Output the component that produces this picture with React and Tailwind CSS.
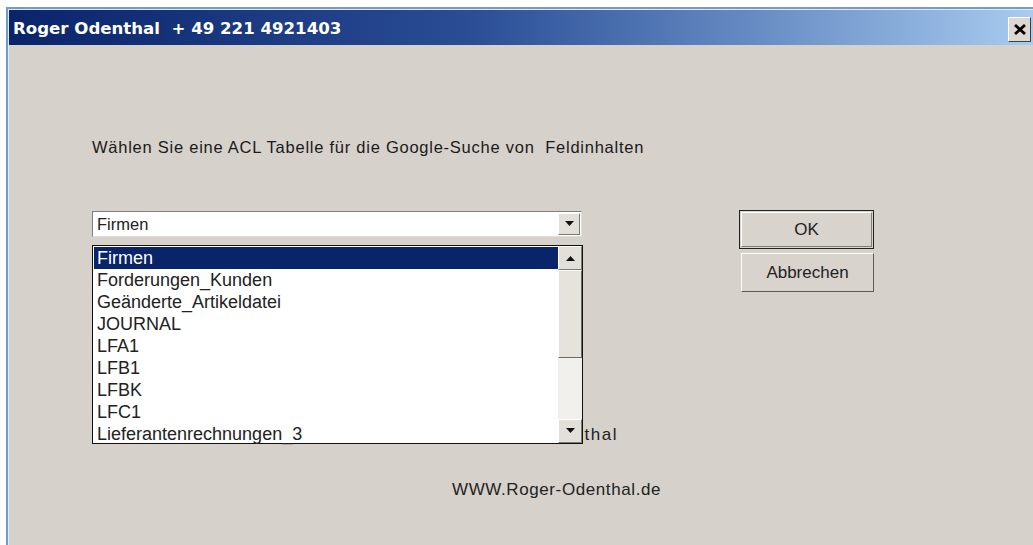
import React from "react";

const items = [
  "Firmen",
  "Forderungen_Kunden",
  "Geänderte_Artikeldatei",
  "JOURNAL",
  "LFA1",
  "LFB1",
  "LFBK",
  "LFC1",
  "Lieferantenrechnungen_3",
];

const font = { fontFamily: '"Liberation Sans", Arial, sans-serif' };

function ArrowDown() {
  return (
    <svg width="9" height="6" viewBox="0 0 9 6">
      <path d="M0 0h9L4.5 5z" fill="#111" />
    </svg>
  );
}

function ArrowUp() {
  return (
    <svg width="9" height="6" viewBox="0 0 9 6">
      <path d="M0 6h9L4.5 1z" fill="#111" />
    </svg>
  );
}

function ScrollButton({ children }) {
  return (
    <div className="h-[24px] w-full flex items-center justify-center bg-[#e3e0da] border border-t-white border-l-white border-r-[#7d7a75] border-b-[#7d7a75]">
      {children}
    </div>
  );
}

export default function App() {
  return (
    <div className="w-[1033px] h-[545px] bg-white pt-[7px] pl-[6px] overflow-hidden" style={font}>
      <div className="h-full border-t-[2px] border-l-[2px] border-[#6f9bd2] bg-[#ece9e2] pt-[1px] pl-[1px] flex flex-col">
        {/* title bar */}
        <div className="h-[35px] shrink-0 flex items-center justify-between bg-gradient-to-r from-[#0a246a] via-[#2a4d96] via-45% to-[#a8cbef] pl-[4px] pr-[2px] pt-[4px]">
          <span className="text-white font-bold" style={{ fontFamily: '"DejaVu Sans", "Liberation Sans", sans-serif', fontSize: 16.6 }}>
            Roger Odenthal&nbsp; + 49 221 4921403
          </span>
          <div className="w-[23px] h-[25px] bg-[#dcd8d1] border border-t-white border-l-white border-r-[#404040] border-b-[#404040] flex items-center justify-center">
            <svg width="12" height="11" viewBox="0 0 12 11">
              <path d="M1 1l10 9M11 1L1 10" stroke="#000" strokeWidth="2.8" />
            </svg>
          </div>
        </div>

        {/* dialog body */}
        <div className="flex-1 bg-[#d6d1ca] flex flex-col pl-[83px]">
          <p className="mt-[93px] text-[16.5px] text-[#1a1a1a] tracking-[0.75px] leading-[18px]">
            Wählen Sie eine ACL Tabelle für die Google-Suche von&nbsp; Feldinhalten
          </p>

          <div className="mt-[55px] flex items-start">
            {/* combo box with its open list */}
            <div className="relative w-[490px]">
              <div className="h-[26px] bg-white border border-t-[#808080] border-l-[#808080] border-r-[#e0ddd8] border-b-[#e0ddd8] flex items-center">
                <span className="flex-1 pl-[4px] text-[16.5px] text-[#222]">Firmen</span>
                <div className="w-[22px] h-[22px] mr-[1px] bg-[#e3e0da] border border-t-white border-l-white border-r-[#7d7a75] border-b-[#7d7a75] flex items-center justify-center">
                  <ArrowDown />
                </div>
              </div>

              <div className="absolute left-0 top-[34px] w-[491px] h-[199px] bg-white border border-[#111] flex z-10">
                <ul className="flex-1 pt-[1px] pl-[1px]">
                  {items.map((it, i) => (
                    <li
                      key={it}
                      className={
                        "h-[22px] leading-[22px] pl-[3px] text-[18px] " +
                        (i === 0 ? "bg-[#0a246a] text-white" : "text-[#222]")
                      }
                    >
                      {it}
                    </li>
                  ))}
                </ul>
                <div className="w-[24px] flex flex-col bg-[#f2f0ec]">
                  <ScrollButton>
                    <ArrowUp />
                  </ScrollButton>
                  <div className="h-[88px] bg-[#e6e3dd] border border-t-white border-l-white border-r-[#6e6b66] border-b-[#6e6b66]" />
                  <div className="flex-1" />
                  <ScrollButton>
                    <ArrowDown />
                  </ScrollButton>
                </div>
              </div>
            </div>

            {/* buttons */}
            <div className="ml-[157px] -mt-[1px] flex flex-col gap-[4px]">
              <button className="w-[135px] h-[39px] border border-[#222] bg-[#d8d4cd] flex items-center justify-center">
                <span className="w-[131px] h-[35px] border border-t-white border-l-white border-r-[#807c76] border-b-[#807c76] flex items-center justify-center text-[17px] text-[#222]">
                  OK
                </span>
              </button>
              <button className="ml-[2px] w-[133px] h-[39px] border border-t-white border-l-white border-r-[#5e5b57] border-b-[#5e5b57] bg-[#d8d4cd] text-[17px] text-[#222]">
                Abbrechen
              </button>
            </div>
          </div>

          <div className="mt-[133px] w-[526px] text-right text-[17px] tracking-[1.5px] text-[#222] leading-[20px]">
            Roger Odenthal
          </div>

          <div className="mt-[35px] pl-[360px] text-[17px] tracking-[0.6px] text-[#222] leading-[20px]">
            WWW.Roger-Odenthal.de
          </div>
        </div>
      </div>
    </div>
  );
}
